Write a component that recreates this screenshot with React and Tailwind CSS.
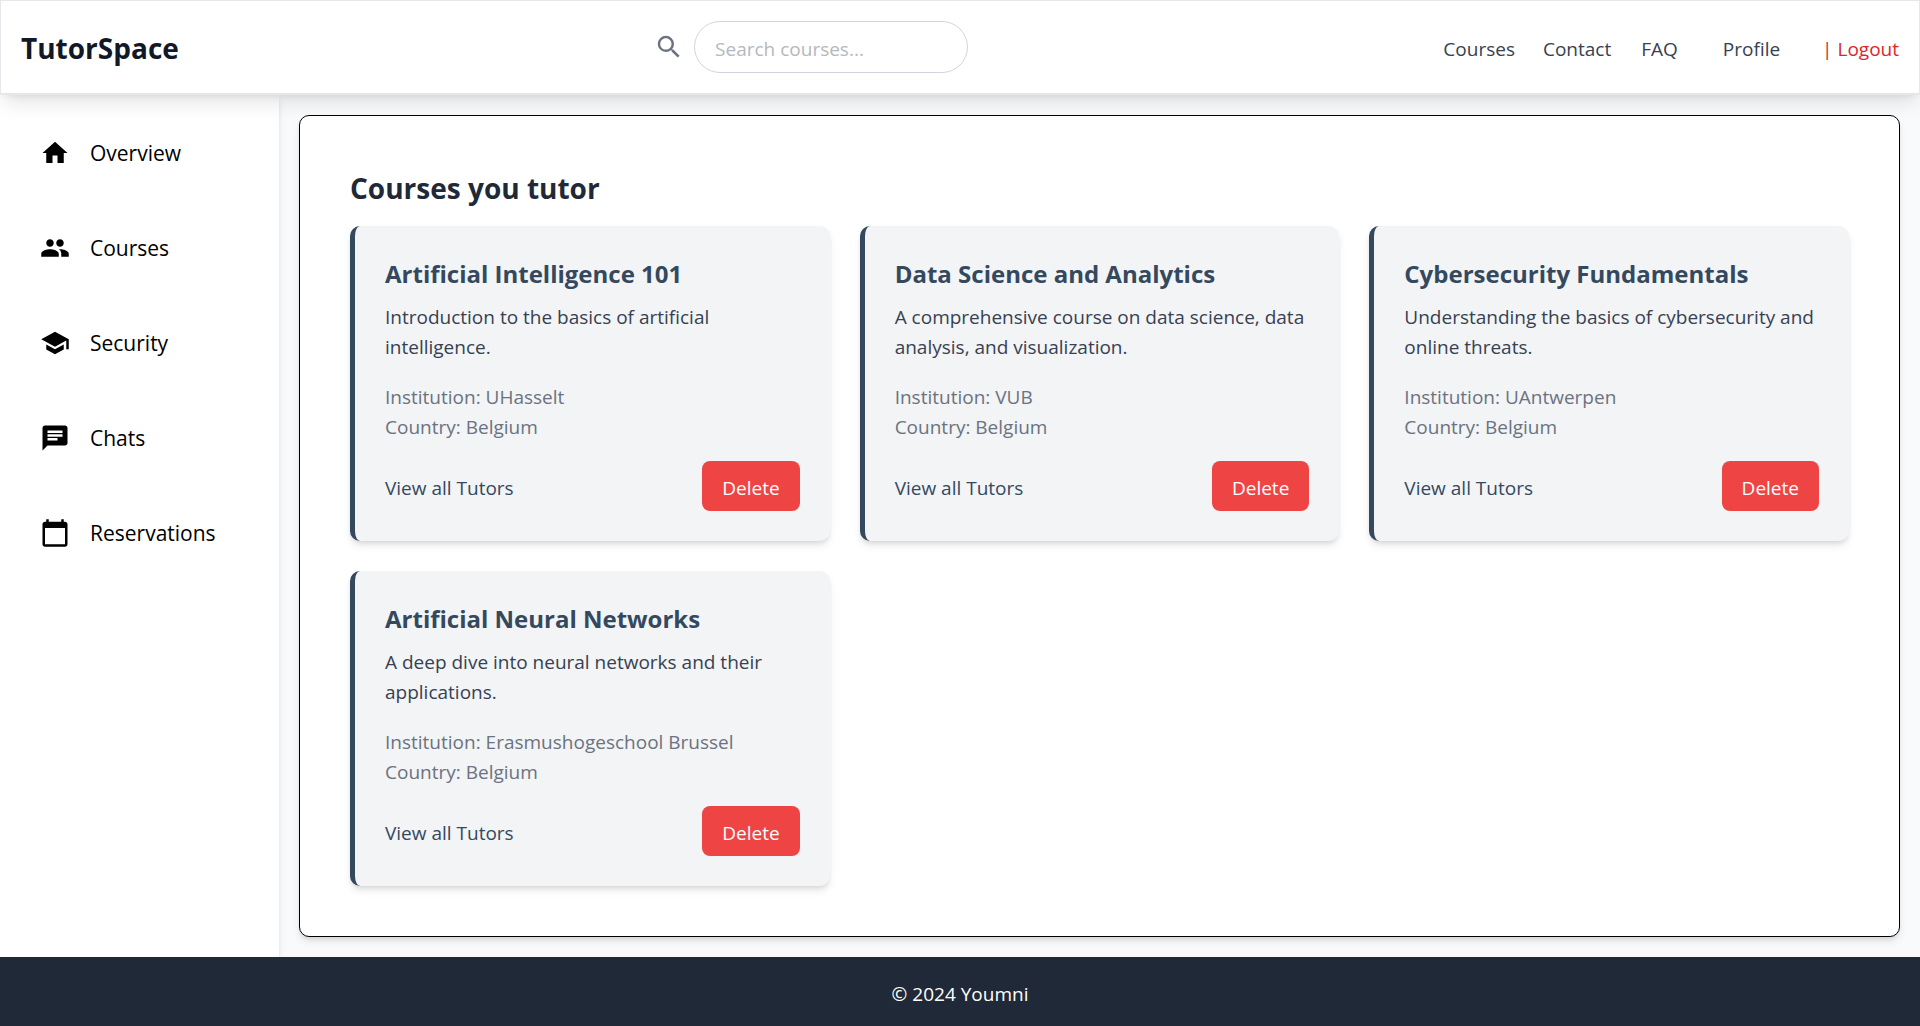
import React from "react";
import {
  MdHome,
  MdPeople,
  MdSchool,
  MdChat,
  MdCalendarToday,
  MdSearch,
} from "react-icons/md";

const links = [
  { label: "Overview", Icon: MdHome },
  { label: "Courses", Icon: MdPeople },
  { label: "Security", Icon: MdSchool },
  { label: "Chats", Icon: MdChat },
  { label: "Reservations", Icon: MdCalendarToday },
];

const courses = [
  {
    title: "Artificial Intelligence 101",
    text: "Introduction to the basics of artificial intelligence.",
    institution: "UHasselt",
  },
  {
    title: "Data Science and Analytics",
    text: "A comprehensive course on data science, data analysis, and visualization.",
    institution: "VUB",
  },
  {
    title: "Cybersecurity Fundamentals",
    text: "Understanding the basics of cybersecurity and online threats.",
    institution: "UAntwerpen",
  },
  {
    title: "Artificial Neural Networks",
    text: "A deep dive into neural networks and their applications.",
    institution: "Erasmushogeschool Brussel",
  },
];

function Header() {
  return (
    <header className="relative z-20 flex items-center justify-between border border-b-2 border-[#e5e7eb] bg-white p-5 shadow-[0_12px_19px_-4px_rgb(0_0_0/0.1),0_5px_8px_-5px_rgb(0_0_0/0.1)]">
      <a href="#home" className="pt-0.5 text-[28px] leading-10 font-bold text-[#111827]">
        TutorSpace
      </a>
      <form className="flex items-center gap-2.5" onSubmit={(e) => e.preventDefault()}>
        <MdSearch className="size-[30px] text-[#6b7280]" aria-hidden="true" />
        <input
          type="search"
          aria-label="Search courses"
          placeholder="Search courses..."
          className="h-[52px] w-[274px] rounded-full border border-[#d1d5db] px-5 pt-1 placeholder:text-[#b4b8c0]"
        />
      </form>
      <nav className="flex items-center pt-1 text-[#374151]">
        <a href="#courses">Courses</a>
        <a href="#contact" className="ml-7">Contact</a>
        <a href="#faq" className="ml-[30px]">FAQ</a>
        <a href="#profile" className="ml-[45px]">Profile</a>
        <button type="button" className="ml-[42px] text-[#dc2626]">| Logout</button>
      </nav>
    </header>
  );
}

function Sidebar() {
  return (
    <aside className="w-[279px] shrink-0 bg-white pt-2.5 shadow-[0_5px_8px_-1px_rgb(0_0_0/0.1),0_3px_5px_-2px_rgb(0_0_0/0.1)]">
      <ul>
        {links.map(({ label, Icon }) => (
          <li key={label}>
            <a
              href={"#" + label.toLowerCase()}
              className="flex h-[95px] items-center gap-5 px-10 text-[21px] text-black"
            >
              <Icon className="size-[30px]" aria-hidden="true" />
              {label}
            </a>
          </li>
        ))}
      </ul>
    </aside>
  );
}

function CourseCard({ title, text, institution }) {
  return (
    <article className="rounded-[10px] border-l-5 border-[#34495e] bg-[#f3f4f6] p-[30px] shadow-[0_5px_8px_-1px_rgb(0_0_0/0.1),0_3px_5px_-2px_rgb(0_0_0/0.1)]">
      <h3 className="text-2xl leading-9 font-bold text-[#34495e]">{title}</h3>
      <p className="mt-2.5 text-[#374151]">{text}</p>
      <div className="mt-5 text-[#6b7280]">
        <p>Institution: {institution}</p>
        <p>Country: Belgium</p>
      </div>
      <div className="mt-[19px] flex items-center justify-between">
        <a href="#tutors" className="pt-1 text-[#34495e]">View all Tutors</a>
        <button type="button" className="rounded-lg bg-[#ef4444] px-5 pt-3 pb-2 text-white">
          Delete
        </button>
      </div>
    </article>
  );
}

export default function App() {
  return (
    <div className="flex min-h-screen flex-col bg-[#f9fafb] font-['Open_Sans',sans-serif] text-[19px] leading-[30px]">
      <Header />
      <div className="flex grow">
        <Sidebar />
        <main className="grow p-5">
          <section className="rounded-[10px] border border-black bg-white p-[50px] shadow-[0_5px_8px_-1px_rgb(0_0_0/0.1),0_3px_5px_-2px_rgb(0_0_0/0.1)]">
            <h2 className="pt-0.5 pb-[18px] text-[28px] leading-10 font-bold text-[#1f2937]">
              Courses you tutor
            </h2>
            <div className="grid grid-cols-3 gap-[30px]">
              {courses.map((c) => (
                <CourseCard key={c.title} {...c} />
              ))}
            </div>
          </section>
        </main>
      </div>
      <footer className="relative z-20 bg-[#1f2937] pt-[22px] pb-[17px] text-center text-white">
        © 2024 Youmni
      </footer>
    </div>
  );
}
